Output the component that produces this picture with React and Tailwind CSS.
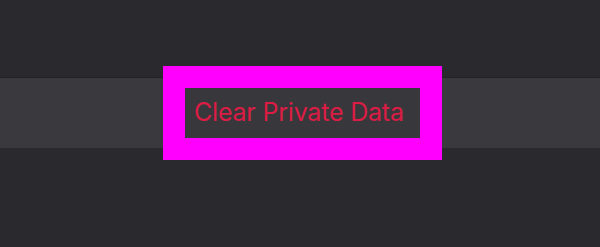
export default function App() {
  return (
    <div className="w-[600px] h-[247px] bg-[#2a2a2e] flex flex-col overflow-hidden" style={{ fontFamily: 'Inter, "Noto Sans", sans-serif' }}>
      <div className="h-[77px] shrink-0" />
      <div className="h-[71px] shrink-0 border-t border-[#222226] bg-[#3a3a3e] flex items-center justify-center pl-[5px]">
        <button className="border-[22px] border-[#ff00ff] bg-[#38383c] w-[279px] h-[94px] flex items-center pl-[9px] pb-[1px] text-[#dc1c44] text-[25px] tracking-[-0.2px] leading-none">
          Clear Private Data
        </button>
      </div>
      <div className="flex-1" />
    </div>
  );
}
